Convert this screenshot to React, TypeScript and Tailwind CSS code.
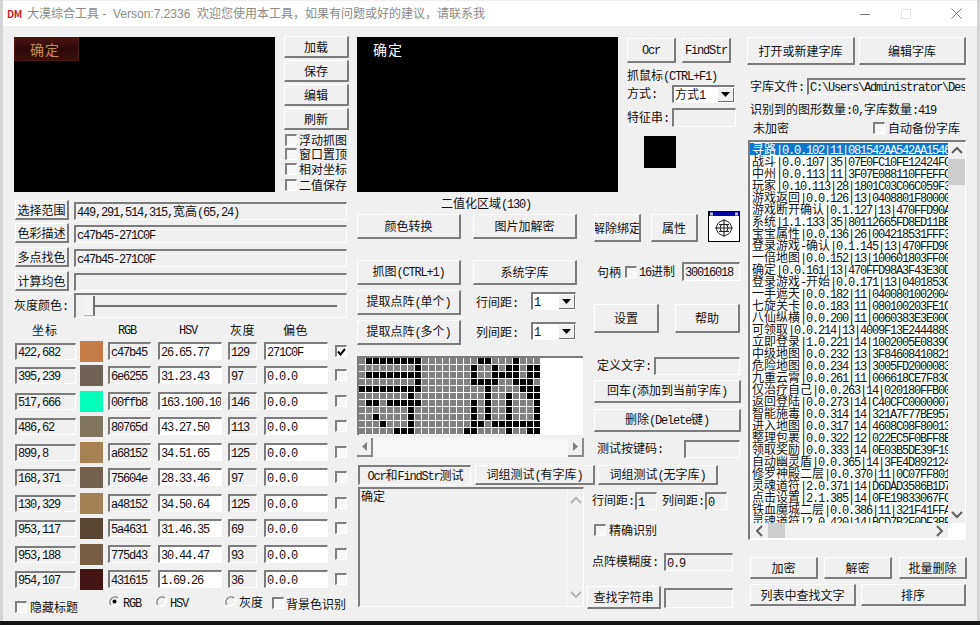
import React from "react";

const ASCII = /([\x00-\x7f]+)/;

function T({ s, white }: { s: string; white?: boolean }) {
  const parts = s.split(ASCII);
  return (
    <span className={"whitespace-pre leading-none " + (white ? "text-white" : "")}>
      {parts.map((p, i) =>
        i % 2 === 1 ? (
          <span key={i} className="font-['Liberation_Mono',monospace] text-[12px] tracking-[-1.2px]">
            {p}
          </span>
        ) : (
          <span key={i}>{p}</span>
        )
      )}
    </span>
  );
}

function Btn({ s, className = "" }: { s: string; className?: string }) {
  return (
    <div
      className={
        "flex shrink-0 items-center justify-center overflow-hidden bg-[#f0f0f0] border-t border-l border-t-white border-l-white border-r-2 border-b-2 border-r-[#7c7c7c] border-b-[#7c7c7c] " +
        className
      }
    >
      <T s={s} />
    </div>
  );
}

function Field({ s = "", className = "" }: { s?: string; className?: string }) {
  return (
    <div
      className={
        "flex shrink-0 items-center overflow-hidden pl-px border-t-2 border-l-2 border-t-[#7c7c7c] border-l-[#7c7c7c] border-r border-b border-r-white border-b-white " +
        className
      }
    >
      <T s={s} />
    </div>
  );
}

function Check({ on, className = "" }: { on?: boolean; className?: string }) {
  return (
    <div
      className={
        "flex h-[12px] w-[12px] shrink-0 items-center justify-center border-t-2 border-l-2 border-t-[#808080] border-l-[#808080] border-r border-b border-r-white border-b-white bg-[#f7f7f7] " +
        className
      }
    >
      {on && (
        <svg width="9" height="8" viewBox="0 0 9 8">
          <path d="M1 3.5 L3.5 6.5 L8 1" stroke="#000" strokeWidth="2" fill="none" />
        </svg>
      )}
    </div>
  );
}

function Radio({ on, className = "" }: { on?: boolean; className?: string }) {
  return (
    <svg width="11" height="11" viewBox="0 0 11 11" className={"shrink-0 " + className}>
      <path d="M9 2 A5 5 0 0 0 2 9" stroke="#808080" strokeWidth="1.2" fill="none" />
      <path d="M2 9 A5 5 0 0 0 9 2" stroke="#fff" strokeWidth="1.2" fill="none" />
      {on && <circle cx="5.5" cy="5.5" r="2" fill="#000" />}
    </svg>
  );
}

function Select({ s, className = "" }: { s: string; className?: string }) {
  return (
    <div
      className={
        "flex h-[18px] shrink-0 items-center justify-between bg-white pl-px border-t-2 border-l-2 border-t-[#7c7c7c] border-l-[#7c7c7c] border-r border-b border-r-white border-b-white " +
        className
      }
    >
      <T s={s} />
      <div className="flex h-[14px] w-[16px] items-center justify-center bg-[#f0f0f0] border-r border-b border-r-[#707070] border-b-[#707070]">
        <svg width="9" height="5" viewBox="0 0 9 5">
          <path d="M0 0 H9 L4.5 5 Z" fill="#000" />
        </svg>
      </div>
    </div>
  );
}

const blackCells: number[][] = [
  [1, 2, 3, 4, 5, 6, 7, 8, 17, 18, 22],
  [8, 16, 19, 21, 22, 24, 25],
  [1, 2, 3, 4, 5, 6, 7, 8, 16, 19, 20, 21, 22, 24, 25],
  [8, 16, 17, 18, 19, 22, 23, 24],
  [0, 1, 2, 3, 4, 5, 6, 7, 8, 18, 23, 24, 25],
  [7, 18, 21, 24, 25],
  [1, 2, 4, 5, 6, 7, 8, 16, 18, 21, 25],
  [7, 16, 18, 21, 25],
  [2, 7, 16, 18, 21, 25],
  [3, 7, 16, 17, 19, 20, 21, 22, 23, 24, 25],
  [5, 6, 7, 15, 16, 21, 24, 25],
];

const colorRows = [
  { pos: "422,682", c: "bg-[#c47b45]", rgb: "c47b45", hsv: "26.65.77", g: "129", off: "271C0F", on: true, h: "h-[24px]" },
  { pos: "395,239", c: "bg-[#6e6255]", rgb: "6e6255", hsv: "31.23.43", g: "97", off: "0.0.0", h: "h-[26px]" },
  { pos: "517,666", c: "bg-[#00ffb8]", rgb: "00ffb8", hsv: "163.100.100", g: "146", off: "0.0.0", h: "h-[25px]" },
  { pos: "486,62", c: "bg-[#80765d]", rgb: "80765d", hsv: "43.27.50", g: "113", off: "0.0.0", h: "h-[26px]" },
  { pos: "899,8", c: "bg-[#a68152]", rgb: "a68152", hsv: "34.51.65", g: "125", off: "0.0.0", h: "h-[25px]" },
  { pos: "168,371", c: "bg-[#75604e]", rgb: "75604e", hsv: "28.33.46", g: "97", off: "0.0.0", h: "h-[26px]" },
  { pos: "130,329", c: "bg-[#a48152]", rgb: "a48152", hsv: "34.50.64", g: "125", off: "0.0.0", h: "h-[25px]" },
  { pos: "953,117", c: "bg-[#5a4631]", rgb: "5a4631", hsv: "31.46.35", g: "69", off: "0.0.0", h: "h-[26px]" },
  { pos: "953,188", c: "bg-[#775d43]", rgb: "775d43", hsv: "30.44.47", g: "93", off: "0.0.0", h: "h-[25px]" },
  { pos: "954,107", c: "bg-[#431615]", rgb: "431615", hsv: "1.69.26", g: "36", off: "0.0.0", h: "h-[25px]" },
];

const listRows = [
  "寻路|0.0.102|11|081542AA542AA1546",
  "战斗|0.0.107|35|07E0FC10FE12424FC",
  "中州|0.0.113|11|3F07E088110FFEFFC",
  "玩家|0.10.113|28|1801C03C06C059F3",
  "游戏返回|0.0.126|13|0408801F80000",
  "游戏断开确认|0.1.127|13|470FFD90A",
  "系统|1.1.133|35|80112665FD8ED11BE",
  "宝宝属性|0.0.136|26|004218531FFF3",
  "登录游戏-确认|0.1.145|13|470FFD98",
  "一倍地图|0.0.152|13|100601803FF00",
  "确定|0.0.161|13|470FFD98A3F43E30D",
  "登录游戏-开始|0.0.171|13|0401853C",
  "一手遮天|0.0.182|11|0400801002004",
  "七旋关卡|0.0.183|11|080100203FE1C",
  "八仙纵横|0.0.200|11|0060383E3E00C",
  "可领取|0.0.214|13|4009F13E2444889",
  "立即登录|1.0.221|14|1002005E0839C",
  "中级地图|0.0.232|13|3F84608410821",
  "危险地图|0.0.234|13|3005FD2000083",
  "九重云霄|0.0.261|11|006618CE7F83C",
  "仅治疗自己|0.0.263|14|020180FFB00",
  "返回登陆|0.0.273|14|C40CFC0000007",
  "智能施毒|0.0.314|14|321A7F77BE957",
  "进入地图|0.0.317|14|4608C08F80013",
  "整理包裹|0.0.322|12|022EC5F0BFF8E",
  "领取奖励|0.0.333|14|0E03B5DE39F19",
  "自动幽灵盾|0.0.365|14|3FE4D892124",
  "修罗神殿二层|0.0.370|11|0C07FF801",
  "灵魂道符|2.0.371|14|D6DAD3586B1D7",
  "点击设置|2.1.385|14|0FE19833067FC",
  "铁血魔城二层|0.0.386|11|321F41FFA",
  "灵魂道符|2.0.420|14|BCD7B2F0DF3BF",
];

function Chevron({ d }: { d: "u" | "d" | "l" | "r" }) {
  const path = { u: "M1 7 L6 2 L11 7", d: "M1 2 L6 7 L11 2", l: "M7 1 L2 6 L7 11", r: "M2 1 L7 6 L2 11" }[d];
  const vert = d === "u" || d === "d";
  return (
    <svg width={vert ? 12 : 9} height={vert ? 9 : 12} viewBox={vert ? "0 0 12 9" : "0 0 9 12"}>
      <path d={path} stroke="#606060" strokeWidth="2" fill="none" />
    </svg>
  );
}

function LeftColumn() {
  return (
    <div className="w-[336px] shrink-0">
      <div className="flex">
        <div className="mt-px h-[155px] w-[261px] bg-black">
          <div className="flex h-[24px] w-[65px] items-center justify-center border border-[#4a1a12] bg-gradient-to-b from-[#4a1410] via-[#2c0a08] to-[#3a0f0b] pr-[3px]">
            <span className="text-[14px] leading-none tracking-[1px] text-[#c98a5c]">确定</span>
          </div>
        </div>
        <div className="ml-[9px] w-[66px]">
          <Btn s="加载" className="h-[22px] w-[65px]" />
          <Btn s="保存" className="mt-[2px] h-[22px] w-[65px]" />
          <Btn s="编辑" className="mt-[2px] h-[22px] w-[65px]" />
          <Btn s="刷新" className="mt-[2px] h-[22px] w-[65px]" />
          {[
            ["浮动抓图", "mt-[3px] h-[14px]"],
            ["窗口置顶", "h-[14px]"],
            ["相对坐标", "mt-px h-[14px]"],
            ["二值保存", "mt-px h-[15px]"],
          ].map(([t, c]) => (
            <div key={t} className={"flex items-center " + c}>
              <Check className="ml-px" />
              <span className="ml-[2px] whitespace-nowrap leading-none">{t}</span>
            </div>
          ))}
        </div>
      </div>

      <div className="mt-[8px] flex h-[23px] items-start">
        <Btn s="选择范围" className="ml-px h-[20px] w-[54px]" />
        <Field s="449,291,514,315,宽高(65,24)" className="ml-[5px] mt-[2px] h-[18px] w-[273px]" />
      </div>
      <div className="flex h-[24px] items-start">
        <Btn s="色彩描述" className="ml-px h-[20px] w-[54px]" />
        <Field s="c47b45-271C0F" className="ml-[5px] mt-[2px] h-[18px] w-[273px]" />
      </div>
      <div className="flex h-[24px] items-start">
        <Btn s="多点找色" className="ml-px h-[20px] w-[54px]" />
        <Field s="c47b45-271C0F" className="ml-[5px] mt-[2px] h-[18px] w-[273px]" />
      </div>
      <div className="flex h-[22px] items-start">
        <Btn s="计算均色" className="ml-px h-[20px] w-[54px]" />
        <Field className="ml-[5px] mt-[2px] h-[18px] w-[273px]" />
      </div>
      <div className="flex h-[25px] items-center">
        <span className="w-[60px] whitespace-nowrap leading-none">
          <T s="灰度颜色:" />
        </span>
        <div className="flex h-[25px] w-[273px] items-center border-t-2 border-l-2 border-t-[#7c7c7c] border-l-[#7c7c7c] border-r border-b border-r-white border-b-white">
          <div className="ml-[8px] h-[20px] w-[11px] shrink-0 bg-[#f4f4f4] border-r-2 border-r-[#707070] border-b border-b-[#b0b0b0]" />
          <div className="mr-[9px] h-[2px] flex-1 bg-[#707070]" />
        </div>
      </div>

      <div className="mt-[4px] flex h-[19px] items-center pb-[4px]">
        <span className="ml-[18px] w-[86px] leading-none tracking-[1px]">坐标</span>
        <span className="w-[61px] leading-none"><T s="RGB" /></span>
        <span className="w-[51px] leading-none"><T s="HSV" /></span>
        <span className="w-[53px] leading-none tracking-[0.5px]">灰度</span>
        <span className="leading-none tracking-[0.5px]">偏色</span>
      </div>

      {colorRows.map((r) => (
        <div key={r.pos} className={"flex items-start " + r.h}>
          <Field s={r.pos} className="ml-px mt-[2px] h-[17px] w-[61px] bg-[#f0f0f0]" />
          <div className={"ml-[4px] h-[21px] w-[23px] shrink-0 " + r.c} />
          <Field s={r.rgb} className="ml-[5px] mt-[1px] h-[18px] w-[43px] bg-[#f0f0f0]" />
          <Field s={r.hsv} className="ml-[7px] mt-[1px] h-[18px] w-[64px] bg-white" />
          <Field s={r.g} className="ml-[6px] mt-[1px] h-[18px] w-[29px] bg-[#f0f0f0]" />
          <Field s={r.off} className="ml-[7px] mt-[1px] h-[18px] w-[64px] bg-white" />
          <Check on={r.on} className="ml-[7px] mt-[4px]" />
        </div>
      ))}

      <div className="mt-[1px] flex h-[20px] items-start">
        <Check className="ml-px mt-[6px]" />
        <span className="ml-[3px] mt-[6px] whitespace-nowrap leading-none">隐藏标题</span>
        <Radio on className="ml-[31px] mt-px" />
        <span className="ml-[3px] mt-[1px] leading-none"><T s="RGB" /></span>
        <Radio className="ml-[15px] mt-px" />
        <span className="ml-[3px] mt-[1px] leading-none"><T s="HSV" /></span>
        <Radio className="ml-[37px] mt-px" />
        <span className="ml-[3px] mt-[1px] whitespace-nowrap leading-none">灰度</span>
        <Check className="ml-[9px] mt-[2px]" />
        <span className="ml-[2px] mt-[3px] whitespace-nowrap leading-none">背景色识别</span>
      </div>
    </div>
  );
}

function WindowIcon() {
  return (
    <svg width="32" height="31" viewBox="0 0 32 31" className="shrink-0">
      <rect x="0.5" y="0.5" width="31" height="30" fill="#fff" stroke="#000" />
      <rect x="1" y="1" width="30" height="4" fill="#0000a8" />
      <rect x="2" y="1.5" width="3" height="3" fill="#c0c0c0" />
      <rect x="27" y="1.5" width="3" height="3" fill="#c0c0c0" />
      <circle cx="16" cy="17" r="7.5" fill="none" stroke="#222" />
      <circle cx="16" cy="17" r="4" fill="none" stroke="#222" />
      <path d="M16 8 V26 M7 17 H25 M11 13.5 H21 M11 20.5 H21" stroke="#222" fill="none" />
    </svg>
  );
}

function CellGrid() {
  return (
    <div className="h-[79px] w-[226px] overflow-hidden bg-white border-t-2 border-l-2 border-t-[#7c7c7c] border-l-[#7c7c7c]">
      <div className="grid grid-cols-[repeat(26,7px)] grid-rows-[repeat(11,7px)]">
        {blackCells.flatMap((row, y) =>
          Array.from({ length: 26 }, (_, x) => (
            <div
              key={y * 26 + x}
              className={"h-[6px] w-[6px] " + (row.includes(x) ? "bg-black" : "bg-[#808080]")}
            />
          ))
        )}
      </div>
    </div>
  );
}

function MiddleColumn() {
  return (
    <div className="ml-[7px] w-[390px] shrink-0">
      <div className="flex">
        <div className="mt-px h-[155px] w-[261px] pl-[16px] pt-[5px] leading-none bg-black">
          <span className="text-[14px] leading-none tracking-[1px] text-white">确定</span>
        </div>
        <div className="ml-[9px] w-[110px]">
          <div className="mt-[2px] flex">
            <Btn s="Ocr" className="h-[25px] w-[49px]" />
            <Btn s="FindStr" className="ml-[6px] h-[25px] w-[49px]" />
          </div>
          <div className="mt-[5px] h-[14px] whitespace-nowrap leading-[14px]">
            <T s="抓鼠标(CTRL+F1)" />
          </div>
          <div className="mt-[3px] flex h-[18px] items-center">
            <span className="w-[45px] leading-none"><T s="方式:" /></span>
            <Select s="方式1" className="w-[63px]" />
          </div>
          <div className="mt-[5px] flex h-[19px] items-center">
            <span className="w-[45px] leading-none"><T s="特征串:" /></span>
            <Field className="h-[19px] w-[64px]" />
          </div>
          <div className="ml-[17px] mt-[9px] h-[32px] w-[32px] bg-black" />
        </div>
      </div>

      <div className="flex">
        <div className="w-[228px] shrink-0">
          <div className="flex h-[22px] items-center justify-center pl-[30px] pt-[1px]">
            <T s="二值化区域(130)" />
          </div>
          <div className="flex">
            <Btn s="颜色转换" className="h-[25px] w-[104px]" />
            <Btn s="图片加解密" className="ml-[12px] h-[25px] w-[104px]" />
          </div>
          <div className="mt-[21px] flex">
            <Btn s="抓图(CTRL+1)" className="h-[25px] w-[104px]" />
            <Btn s="系统字库" className="ml-[12px] h-[25px] w-[104px]" />
          </div>
          <div className="mt-[5px] flex">
            <Btn s="提取点阵(单个)" className="h-[25px] w-[104px]" />
            <span className="ml-[15px] flex h-[25px] w-[55px] items-center"><T s="行间距:" /></span>
            <Select s="1" className="mt-[2px] w-[45px]" />
          </div>
          <div className="mt-[5px] flex">
            <Btn s="提取点阵(多个)" className="h-[25px] w-[104px]" />
            <span className="ml-[15px] flex h-[25px] w-[55px] items-center"><T s="列间距:" /></span>
            <Select s="1" className="mt-[2px] w-[45px]" />
          </div>
          <div className="mt-[11px]">
            <CellGrid />
          </div>
          <div className="mt-[3px] flex h-[19px] w-[227px] items-stretch justify-between bg-[#f6f6f6]">
            <div className="flex w-[16px] items-center justify-center border-r-2 border-b-2 border-r-[#8a8a8a] border-b-[#8a8a8a] bg-[#f0f0f0]">
              <svg width="5" height="9" viewBox="0 0 5 9"><path d="M5 0 V9 L0 4.5 Z" fill="#808080" /></svg>
            </div>
            <div className="flex w-[16px] items-center justify-center border-r-2 border-b-2 border-r-[#8a8a8a] border-b-[#8a8a8a] bg-[#f0f0f0]">
              <svg width="5" height="9" viewBox="0 0 5 9"><path d="M0 0 V9 L5 4.5 Z" fill="#808080" /></svg>
            </div>
          </div>
        </div>

        <div className="ml-[2px] w-[158px]">
          <div className="mt-[19px] flex h-[31px]">
            <Btn s="解除绑定" className="ml-[7px] mt-[3px] h-[28px] w-[47px]" />
            <Btn s="属性" className="ml-[10px] mt-[3px] h-[28px] w-[47px]" />
            <div className="ml-[10px]"><WindowIcon /></div>
          </div>
          <div className="mt-[20px] flex h-[19px] items-center">
            <span className="ml-[10px] w-[28px] leading-none">句柄</span>
            <Check />
            <span className="ml-[2px] w-[43px] whitespace-nowrap leading-none"><T s="16进制" /></span>
            <Field s="30016018" className="h-[19px] w-[58px] bg-[#f0f0f0]" />
          </div>
          <div className="mt-[23px] flex">
            <Btn s="设置" className="ml-[7px] h-[29px] w-[65px]" />
            <Btn s="帮助" className="ml-[16px] h-[29px] w-[65px]" />
          </div>
          <div className="mt-[24px] flex h-[18px] items-center">
            <span className="ml-[10px] w-[57px] whitespace-nowrap leading-none"><T s="定义文字:" /></span>
            <Field className="h-[18px] w-[86px]" />
          </div>
          <Btn s="回车(添加到当前字库)" className="ml-[7px] mt-[5px] h-[23px] w-[147px]" />
          <Btn s="删除(Delete键)" className="ml-[7px] mt-[6px] h-[23px] w-[147px]" />
          <div className="mt-[8px] flex h-[18px] items-center">
            <span className="ml-[10px] w-[87px] whitespace-nowrap leading-none"><T s="测试按键码:" /></span>
            <Field className="h-[18px] w-[56px]" />
          </div>
        </div>
      </div>

      <div className="ml-px mt-[7px] flex h-[20px]">
        <Field className="h-[20px] w-[113px] justify-center" s="Ocr和FindStr测试" />
        <Btn s="词组测试(有字库)" className="ml-[4px] h-[20px] w-[120px]" />
        <Btn s="词组测试(无字库)" className="ml-[3px] h-[20px] w-[120px]" />
      </div>

      <div className="mt-[2px] flex">
        <div className="ml-px flex h-[120px] w-[226px] shrink-0 border-t-2 border-l-2 border-t-[#7c7c7c] border-l-[#7c7c7c] border-r border-b border-r-white border-b-white">
          <div className="h-full flex-1 pl-[1px] pt-[1px] leading-none">确定</div>
          <div className="flex h-full w-[16px] flex-col items-center justify-between border-l border-l-white py-[7px] opacity-40">
            <Chevron d="u" />
            <Chevron d="d" />
          </div>
        </div>
        <div className="ml-[3px] w-[158px]">
          <div className="ml-[5px] mt-[5px] flex h-[18px] items-center">
            <span className="w-[43px] whitespace-nowrap leading-none"><T s="行间距:" /></span>
            <Field s="1" className="h-[18px] w-[22px]" />
            <span className="ml-[5px] w-[43px] whitespace-nowrap leading-none"><T s="列间距:" /></span>
            <Field s="0" className="h-[18px] w-[22px]" />
          </div>
          <div className="ml-[7px] mt-[14px] flex h-[12px] items-center">
            <Check />
            <span className="ml-[3px] whitespace-nowrap leading-none">精确识别</span>
          </div>
          <div className="ml-[5px] mt-[17px] flex h-[18px] items-center">
            <span className="w-[72px] whitespace-nowrap leading-none"><T s="点阵模糊度:" /></span>
            <Field s="0.9" className="h-[18px] w-[69px]" />
          </div>
          <div className="mt-[15px] flex">
            <Btn s="查找字符串" className="h-[23px] w-[74px]" />
            <Field className="ml-[3px] mt-[2px] h-[20px] w-[69px]" />
          </div>
        </div>
      </div>
    </div>
  );
}

function RightColumn() {
  return (
    <div className="w-[220px] shrink-0">
      <div className="mt-px flex">
        <Btn s="打开或新建字库" className="h-[28px] w-[108px]" />
        <Btn s="编辑字库" className="ml-[4px] h-[28px] w-[107px]" />
      </div>
      <div className="mt-[13px] flex h-[17px] items-center">
        <span className="ml-[3px] w-[57px] whitespace-nowrap leading-none"><T s="字库文件:" /></span>
        <Field s="C:\Users\Administrator\Des" className="h-[17px] w-[159px]" />
      </div>
      <div className="ml-[3px] mt-[7px] h-[14px] whitespace-nowrap leading-[14px]">
        <T s="识别到的图形数量:0,字库数量:419" />
      </div>
      <div className="mt-[5px] flex h-[14px] items-center">
        <span className="ml-[6px] w-[120px] leading-none">未加密</span>
        <Check />
        <span className="ml-[3px] whitespace-nowrap leading-none">自动备份字库</span>
      </div>
      <div className="ml-px mt-[5px] h-[400px] w-[218px] border-t-2 border-l-2 border-t-[#7c7c7c] border-l-[#7c7c7c] border-r border-b border-r-white border-b-white bg-white">
        <div className="flex h-[381px]">
          <div className="h-full w-[198px] overflow-hidden pt-[1px]">
            {listRows.map((r, i) => (
              <div
                key={r + i}
                className={
                  "h-[12px] whitespace-nowrap pl-[2px] leading-[12px] " +
                  (i === 0 ? "bg-[#0f78cc] text-white" : "")
                }
              >
                <T s={r} />
              </div>
            ))}
          </div>
          <div className="flex h-full w-[17px] flex-col items-center bg-[#f0f0f0]">
            <div className="flex h-[17px] items-center"><Chevron d="u" /></div>
            <div className="h-[26px] w-full bg-[#cdcdcd]" />
            <div className="flex-1" />
            <div className="flex h-[17px] items-center"><Chevron d="d" /></div>
          </div>
        </div>
        <div className="flex h-[15px] w-[198px] items-center bg-[#f0f0f0]">
          <div className="flex w-[18px] justify-center"><Chevron d="l" /></div>
          <div className="h-full w-[17px] bg-[#cdcdcd]" />
          <div className="flex-1" />
          <div className="flex w-[18px] justify-center"><Chevron d="r" /></div>
        </div>
      </div>
      <div className="ml-[3px] mt-[17px] flex">
        <Btn s="加密" className="h-[22px] w-[68px]" />
        <Btn s="解密" className="ml-[6px] h-[22px] w-[68px]" />
        <Btn s="批量删除" className="ml-[7px] h-[22px] w-[68px]" />
      </div>
      <div className="ml-[3px] mt-[5px] flex">
        <Btn s="列表中查找文字" className="h-[22px] w-[106px]" />
        <Btn s="排序" className="ml-[5px] h-[22px] w-[105px]" />
      </div>
    </div>
  );
}

export default function App() {
  return (
    <div className="h-[625px] w-[980px] overflow-hidden bg-[#d4d4d4] font-['Noto_Sans_CJK_SC','Liberation_Sans',sans-serif] text-[12px] text-[#111]">
      <div className="ml-[3px] h-[621px] w-[974px] bg-[#f0f0f0] pt-px">
        <div className="flex h-[25px] items-center bg-white">
          <span className="ml-[4px] w-[20px] text-[10px] font-bold leading-none tracking-[-0.5px] text-[#c4202c]">DM</span>
          <span className="whitespace-pre text-[12px] leading-none text-[#8a8a8a] font-['Liberation_Sans','Noto_Sans_CJK_SC',sans-serif]">
            {"大漠综合工具 -  Verson:7.2336  欢迎您使用本工具，如果有问题或好的建议，请联系我"}
          </span>
          <div className="ml-auto flex items-center pr-[15px]">
            <svg width="10" height="10" viewBox="0 0 10 10"><path d="M0 5.5 H10" stroke="#777" /></svg>
            <svg width="10" height="10" viewBox="0 0 10 10" className="ml-[31px]"><rect x="0.5" y="0.5" width="9" height="9" fill="none" stroke="#e4e4e4" /></svg>
            <svg width="11" height="11" viewBox="0 0 11 11" className="ml-[40px]"><path d="M0.5 0.5 L10.5 10.5 M10.5 0.5 L0.5 10.5" stroke="#777" /></svg>
          </div>
        </div>
        <div className="flex pl-[11px] pt-[10px]">
          <LeftColumn />
          <MiddleColumn />
          <RightColumn />
        </div>
      </div>
      <div className="h-[4px] bg-[#161616]" />
    </div>
  );
}
